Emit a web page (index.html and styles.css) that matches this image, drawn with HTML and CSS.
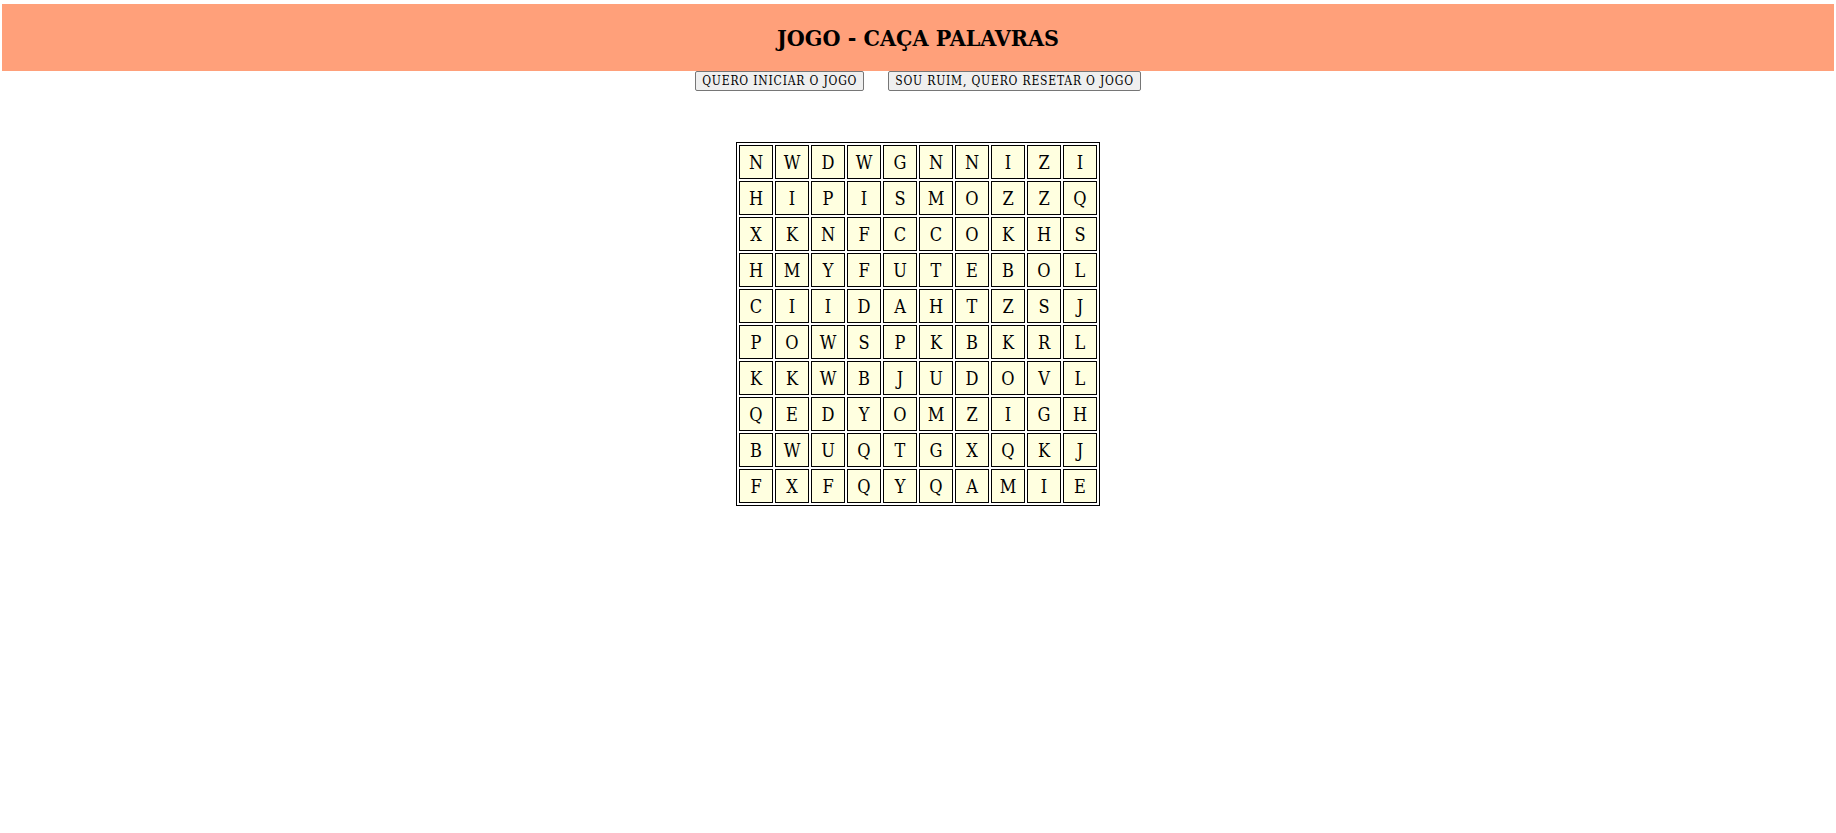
FILE: index.html
```html
<!DOCTYPE html>
<html lang="pt-BR">
<head>
<meta charset="utf-8">
<title>Jogo - Caça Palavras</title>
<link rel="stylesheet" href="styles.css">
</head>
<body>
<header class="topo"><h1 class="titulo">JOGO - CAÇA PALAVRAS</h1></header>
<div class="acoes">
  <button class="botao">QUERO INICIAR O JOGO</button>
  <button class="botao">SOU RUIM, QUERO RESETAR O JOGO</button>
</div>
<div class="area">
<table class="grade">
<tbody>
<tr><td>N</td><td>W</td><td>D</td><td>W</td><td>G</td><td>N</td><td>N</td><td>I</td><td>Z</td><td>I</td></tr>
<tr><td>H</td><td>I</td><td>P</td><td>I</td><td>S</td><td>M</td><td>O</td><td>Z</td><td>Z</td><td>Q</td></tr>
<tr><td>X</td><td>K</td><td>N</td><td>F</td><td>C</td><td>C</td><td>O</td><td>K</td><td>H</td><td>S</td></tr>
<tr><td>H</td><td>M</td><td>Y</td><td>F</td><td>U</td><td>T</td><td>E</td><td>B</td><td>O</td><td>L</td></tr>
<tr><td>C</td><td>I</td><td>I</td><td>D</td><td>A</td><td>H</td><td>T</td><td>Z</td><td>S</td><td>J</td></tr>
<tr><td>P</td><td>O</td><td>W</td><td>S</td><td>P</td><td>K</td><td>B</td><td>K</td><td>R</td><td>L</td></tr>
<tr><td>K</td><td>K</td><td>W</td><td>B</td><td>J</td><td>U</td><td>D</td><td>O</td><td>V</td><td>L</td></tr>
<tr><td>Q</td><td>E</td><td>D</td><td>Y</td><td>O</td><td>M</td><td>Z</td><td>I</td><td>G</td><td>H</td></tr>
<tr><td>B</td><td>W</td><td>U</td><td>Q</td><td>T</td><td>G</td><td>X</td><td>Q</td><td>K</td><td>J</td></tr>
<tr><td>F</td><td>X</td><td>F</td><td>Q</td><td>Y</td><td>Q</td><td>A</td><td>M</td><td>I</td><td>E</td></tr>
</tbody>
</table>
</div>
</body>
</html>
```
FILE: styles.css
```css
html, body {
  background: #ffffff;
}
body {
  margin: 4px 2px 0;
  font-family: "DejaVu Serif Condensed", "DejaVu Serif", serif;
  color: #000;
}
.topo {
  background: #ffa07a;
  height: 67px;
  display: flex;
  align-items: center;
  justify-content: center;
}
.titulo {
  margin: 0;
  font-size: 23px;
  font-weight: bold;
  letter-spacing: 0;
}
.acoes {
  display: flex;
  justify-content: center;
  gap: 24px;
}
.botao {
  font-family: "DejaVu Serif Condensed", "DejaVu Serif", serif;
  font-size: 12px;
  height: 20px;
  padding: 0 6px;
  border: 1px solid #767676;
  border-radius: 2px;
  background: #efefef;
  color: #000;
  letter-spacing: 0.8px;
}
.area {
  display: flex;
  justify-content: center;
  margin-top: 51px;
}
.grade {
  border: 1px solid #000;
  border-spacing: 2px;
}
.grade td {
  width: 34px;
  height: 34px;
  padding: 0;
  box-sizing: border-box;
  border: 1px solid #000;
  background: #ffffe0;
  text-align: center;
  font-size: 18px;
}
```
